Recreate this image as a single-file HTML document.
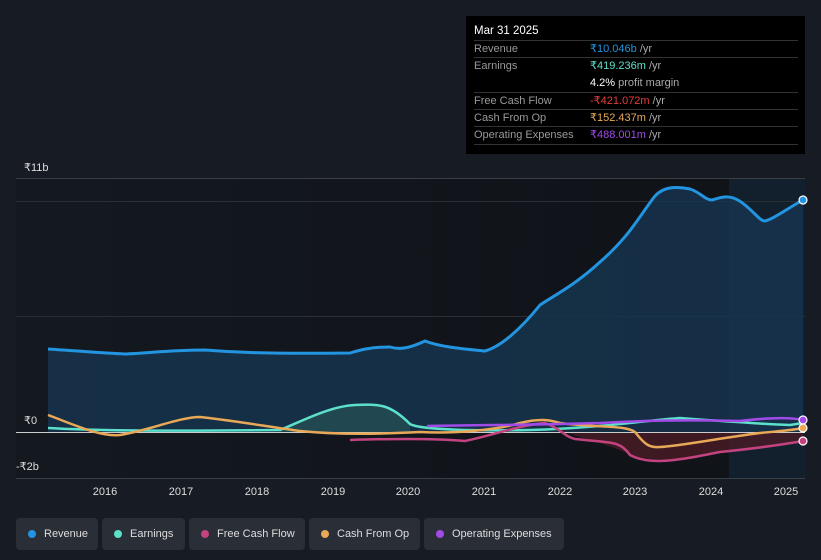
<!DOCTYPE html>
<html><head><style>
body{margin:0;width:821px;height:560px;background:#171c24;font-family:"Liberation Sans",sans-serif;overflow:hidden;position:relative}
.tip{position:absolute;left:466px;top:16px;width:339px;height:138px;background:#000;color:#fff;font-size:11px}
.tip .h{position:absolute;left:8px;top:9px;font-size:11.5px}
.row{position:absolute;left:8px;width:324px;height:17px;border-top:1px solid #333;line-height:17px;color:#999}
.row span{position:absolute;left:116px}
.leg{position:absolute;top:518px;height:32px;background:#2a2e36;border-radius:4px;color:#ddd;font-size:11px;line-height:32px}
.leg i{position:absolute;left:12px;top:12px;width:8px;height:8px;border-radius:50%}
.leg b{font-weight:normal;position:absolute;left:28px}
</style></head><body>
<svg width="821" height="560" style="position:absolute;left:0;top:0">
<defs><linearGradient id="g" x1="0" y1="0" x2="1" y2="0"><stop offset="0" stop-color="#141920"/><stop offset="1" stop-color="#0f1217"/></linearGradient></defs>
<rect x="16" y="178" width="789" height="300" fill="url(#g)"/>
<rect x="729" y="178" width="76" height="300" fill="#12202d"/>
<line x1="16" y1="178.5" x2="805" y2="178.5" stroke="#3a3e45"/>
<line x1="16" y1="201.5" x2="805" y2="201.5" stroke="#2a2e35"/>
<line x1="16" y1="316.5" x2="805" y2="316.5" stroke="#2a2e35"/>
<line x1="16" y1="478.5" x2="805" y2="478.5" stroke="#3a3e45"/>
<path d="M48,349 C80,351 100,353 125,354 C150,353 170,350 205,350 C230,352 260,354 350,353 C360,350 370,347 390,347 C400,350 410,348 425,341 C440,347 465,349 485,351 C500,347 520,330 540,305 C555,295 575,285 600,262 C630,236 640,215 655,196 C665,185 680,187 690,189 C700,192 705,200 712,200 C720,198 730,192 745,205 C755,213 760,221 765,221 C775,218 785,210 803,200 L803,432 L48,432 Z" fill="#16344d" opacity="0.85"/>
<path d="M280,430 C300,422 330,408 355,405 C380,404 390,404 410,424 L410,432 L280,432Z" fill="#2a5a56" opacity="0.6"/>
<path d="M560,428 C575,439 610,443 630,455 C650,463 680,460 720,452 C760,448 780,445 803,441 L803,432 L560,432Z" fill="#4a1c25" opacity="0.8"/>
<line x1="16" y1="432.5" x2="805" y2="432.5" stroke="#ccc" stroke-width="1"/>
<path d="M48,349 C80,351 100,353 125,354 C150,353 170,350 205,350 C230,352 260,354 350,353 C360,350 370,347 390,347 C400,350 410,348 425,341 C440,347 465,349 485,351 C500,347 520,330 540,305 C555,295 575,285 600,262 C630,236 640,215 655,196 C665,185 680,187 690,189 C700,192 705,200 712,200 C720,198 730,192 745,205 C755,213 760,221 765,221 C775,218 785,210 803,200" fill="none" stroke="#2394df" stroke-width="3"/>
<path d="M48,428 C100,431 200,431 280,430 C300,422 330,406 355,405 C380,404 390,404 410,424 C420,430 480,431 530,430 C600,428 650,420 680,418 C720,421 760,424 790,425 L803,423" fill="none" stroke="#5ce0cb" stroke-width="2.5"/>
<path d="M350,440 C380,439 430,438 465,441 C490,436 520,425 545,423 C560,428 565,437 575,439 C610,443 620,440 630,455 C650,466 680,460 720,452 C760,448 780,445 803,441" fill="none" stroke="#c2437f" stroke-width="2.5"/>
<path d="M48,415 C75,425 100,437 120,435 C150,430 180,417 200,417 C230,420 270,427 300,431 C340,435 380,434 420,432 C460,434 500,429 520,423 C540,418 550,420 560,423 C600,428 625,425 635,432 C645,445 650,448 660,447 C680,446 720,438 760,433 C780,431 795,430 803,428" fill="none" stroke="#e8a857" stroke-width="2.5"/>
<path d="M427,426 C480,425 530,425 600,423 C650,420 700,420 740,421 C765,418 790,417 803,420" fill="none" stroke="#a04be8" stroke-width="2.5"/>
<circle cx="803" cy="200" r="4" fill="#2394df" stroke="#fff" stroke-width="1.2"/>
<circle cx="803" cy="420" r="4" fill="#a04be8" stroke="#fff" stroke-width="1.2"/>
<circle cx="803" cy="428" r="4" fill="#e8a857" stroke="#fff" stroke-width="1.2"/>
<circle cx="803" cy="441" r="4" fill="#c2437f" stroke="#fff" stroke-width="1.2"/>
<g fill="#ddd" font-size="11" font-family="Liberation Sans,sans-serif">
<text x="24" y="171">₹11b</text><text x="24" y="424">₹0</text><text x="16" y="470">-₹2b</text>
<g text-anchor="middle"><text x="105" y="495">2016</text><text x="181" y="495">2017</text><text x="257" y="495">2018</text><text x="333" y="495">2019</text><text x="408" y="495">2020</text><text x="484" y="495">2021</text><text x="560" y="495">2022</text><text x="635" y="495">2023</text><text x="711" y="495">2024</text><text x="786" y="495">2025</text></g>
</g>
</svg>
<div class="tip"><div class="h">Mar 31 2025</div>
<div class="row" style="top:24px">Revenue<span style="color:#2394df">₹10.046b <em style="font-style:normal;color:#aaa">/yr</em></span></div>
<div class="row" style="top:41px">Earnings<span style="color:#5ce0cb">₹419.236m <em style="font-style:normal;color:#aaa">/yr</em></span></div>
<div class="row" style="top:59px;border:0"><span style="color:#fff">4.2% <em style="font-style:normal;color:#aaa">profit margin</em></span></div>
<div class="row" style="top:76px">Free Cash Flow<span style="color:#e53c3c">-₹421.072m <em style="font-style:normal;color:#aaa">/yr</em></span></div>
<div class="row" style="top:93px">Cash From Op<span style="color:#e8a857">₹152.437m <em style="font-style:normal;color:#aaa">/yr</em></span></div>
<div class="row" style="top:110px">Operating Expenses<span style="color:#a04be8">₹488.001m <em style="font-style:normal;color:#aaa">/yr</em></span></div>
<div class="row" style="top:128px;height:0"></div>
</div>
<div class="leg" style="left:16px;width:82px"><i style="background:#2394df"></i><b>Revenue</b></div>
<div class="leg" style="left:102px;width:83px"><i style="background:#5ce0cb"></i><b>Earnings</b></div>
<div class="leg" style="left:189px;width:116px"><i style="background:#c2437f"></i><b>Free Cash Flow</b></div>
<div class="leg" style="left:309px;width:111px"><i style="background:#e8a857"></i><b>Cash From Op</b></div>
<div class="leg" style="left:424px;width:140px"><i style="background:#a04be8"></i><b>Operating Expenses</b></div>
</body></html>
